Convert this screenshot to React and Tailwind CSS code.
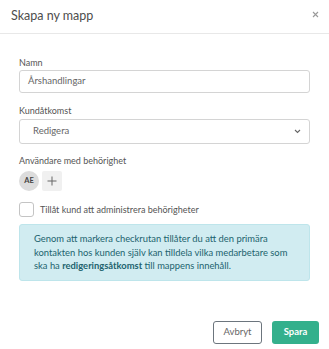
import React from 'react'

export default function App() {
  return (
    <div className="w-[329px] h-[349px] bg-white flex flex-col font-['Lato',sans-serif] text-[#4a4a4a]">
      {/* header */}
      <div className="h-[34px] shrink-0 border-b border-[#e8e8e8] flex items-center justify-between pl-[11px] pr-[10px]">
        <span className="text-[12.5px] leading-none text-[#4d4d4d]">Skapa ny mapp</span>
        <svg width="7" height="7" viewBox="0 0 7 7" className="mb-[4px]">
          <path d="M1 1 L6 6 M6 1 L1 6" stroke="#9a9a9a" strokeWidth="1.1" />
        </svg>
      </div>

      {/* body */}
      <div className="px-[19px] pt-[23px] flex flex-col">
        <label className="text-[9px] leading-[11px] text-[#555]">Namn</label>
        <div className="mt-[2px] h-[23px] border border-[#d4d4d4] rounded-[3px] flex items-center px-[8px] text-[9.5px] text-[#666]">
          Årshandlingar
        </div>

        <label className="mt-[12px] text-[9px] leading-[11px] text-[#555]">Kundåtkomst</label>
        <div className="mt-[3px] h-[25px] border border-[#d4d4d4] rounded-[3px] flex items-center justify-between pl-[13px] pr-[8px] text-[9.5px] text-[#666]">
          <span>Redigera</span>
          <svg width="7" height="5" viewBox="0 0 7 5">
            <path d="M1 1 L3.5 3.5 L6 1" stroke="#666" strokeWidth="1.1" fill="none" />
          </svg>
        </div>

        <label className="mt-[11px] text-[9px] leading-[11px] text-[#555]">Användare med behörighet</label>
        <div className="mt-[5px] flex items-center gap-[3px]">
          <div className="w-[20px] h-[20px] rounded-full bg-[#dcdcdc] flex items-center justify-center text-[7.5px] font-bold text-[#444]">
            AE
          </div>
          <div className="w-[20px] h-[20px] bg-[#f0f0f0] rounded-[2px] flex items-center justify-center">
            <svg width="10" height="10" viewBox="0 0 10 10">
              <path d="M5 0.5 V9.5 M0.5 5 H9.5" stroke="#666" strokeWidth="1" />
            </svg>
          </div>
        </div>

        <div className="mt-[11px] flex items-center gap-[6px]">
          <div className="w-[15px] h-[15px] border border-[#c4c4c4] rounded-[3px] bg-white" />
          <span className="text-[9px] text-[#555]">Tillåt kund att administrera behörigheter</span>
        </div>

        <div className="mt-[7px] bg-[#d1ecf1] border border-[#bee5eb] rounded-[3px] pl-[14px] pr-[8px] py-[7px] text-[9.4px] leading-[13.5px] text-[#21636e]">
          Genom att markera checkrutan tillåter du att den primära kontakten hos kunden själv kan tilldela vilka medarbetare som ska ha{' '}
          <span className="font-bold">redigeringsåtkomst</span> till mappens innehåll.
        </div>
      </div>

      {/* footer */}
      <div className="mt-auto flex justify-end gap-[10px] pr-[10px] pb-[5px]">
        <button className="w-[49px] h-[23px] border border-[#6c757d] rounded-[3px] text-[9.5px] text-[#666] bg-white">
          Avbryt
        </button>
        <button className="w-[47px] h-[23px] rounded-[3px] bg-[#34b08c] text-[9.5px] font-bold text-white">
          Spara
        </button>
      </div>
    </div>
  )
}
